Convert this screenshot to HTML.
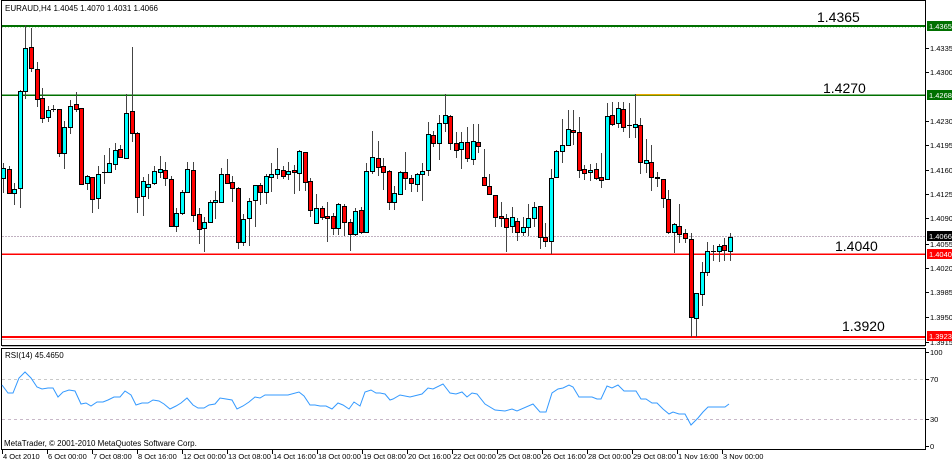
<!DOCTYPE html>
<html><head><meta charset="utf-8">
<style>
html,body{margin:0;padding:0;background:#fff;}
body{width:952px;height:462px;overflow:hidden;font-family:"Liberation Sans",sans-serif;}
svg text{font-family:"Liberation Sans",sans-serif;}
</style></head>
<body>
<svg id="s" width="952" height="462" xmlns="http://www.w3.org/2000/svg" shape-rendering="crispEdges">
<rect x="0" y="0" width="952" height="462" fill="#fff"/>
<!-- panels -->
<rect x="1.5" y="0.5" width="924" height="345" fill="none" stroke="#000"/>
<rect x="1.5" y="348.5" width="924" height="101" fill="none" stroke="#000"/>
<line x1="2" y1="346.5" x2="925" y2="346.5" stroke="#bbb"/>
<!-- horizontal lines -->
<line x1="2" y1="27.5" x2="925" y2="27.5" stroke="#b6e0b6" stroke-dasharray="1,2"/>
<line x1="2" y1="26" x2="925" y2="26" stroke="#007000" stroke-width="2"/>
<line x1="2" y1="95" x2="925" y2="95" stroke="#007000" stroke-width="1.5"/>
<line x1="635" y1="94.5" x2="680" y2="94.5" stroke="#e8a800" stroke-width="1.5"/>
<line x1="2" y1="236.5" x2="925" y2="236.5" stroke="#c0b0c0" stroke-dasharray="2,1"/>
<line x1="2" y1="254" x2="925" y2="254" stroke="#ff0000" stroke-width="1.5"/>
<line x1="2" y1="337" x2="925" y2="337" stroke="#ff0000" stroke-width="2"/>
<line x1="2" y1="339.5" x2="925" y2="339.5" stroke="#ffc0c0"/>
<line x1="2" y1="379.5" x2="925" y2="379.5" stroke="#c8c8c8" stroke-dasharray="3,3"/>
<line x1="2" y1="419.5" x2="925" y2="419.5" stroke="#c8b8c8" stroke-dasharray="3,3"/>
<g id="candles"></g>
<polyline id="rsi" fill="none" stroke="#3399ff" stroke-width="1" shape-rendering="auto"/>
<!-- texts -->
<text x="5" y="11" font-size="8" fill="#000">EURAUD,H4  1.4045 1.4070 1.4031 1.4066</text>
<text x="5" y="358" font-size="8" fill="#000">RSI(14) 45.4650</text>
<text x="4" y="446" font-size="8" fill="#000">MetaTrader, © 2001-2010 MetaQuotes Software Corp.</text>
<text x="817" y="22" font-size="14" fill="#000">1.4365</text>
<text x="823" y="93" font-size="14" fill="#000">1.4270</text>
<text x="835" y="251" font-size="14" fill="#000">1.4040</text>
<text x="842" y="331" font-size="14" fill="#000">1.3920</text>
<g id="axis" font-size="7.5" fill="#000"></g>
</svg>
<script>
var C=[
[168,178,163,193,1],[169,193,166,194,0],[193,189,183,205,1],[188,91,90,208,1],[91,48,25,99,1],[47,68,28,72,0],[69,99,62,107,0],[98,118,88,123,0],[117,110,106,122,1],[109,109,105,112,1],
[109,153,109,157,0],[153,127,121,169,1],[127,106,100,134,1],[104,109,92,112,0],[108,184,108,184,0],[183,176,175,190,1],[177,199,177,213,0],[198,174,166,209,1],[172,172,155,184,1],[172,163,148,173,1],
[164,150,143,170,1],[149,157,145,158,0],[158,113,94,159,1],[111,133,47,142,0],[133,197,132,213,0],[196,181,177,216,1],[187,184,174,199,1],[183,171,166,185,1],[172,169,156,178,1],[170,178,162,186,0],
[179,226,176,227,0],[226,213,208,232,1],[213,192,190,215,1],[192,169,162,193,1],[170,215,162,222,0],[214,229,208,244,0],[228,222,217,252,1],[222,202,200,223,1],[202,200,191,219,1],[202,174,168,203,1],
[174,183,159,184,0],[182,188,176,202,0],[188,242,187,249,0],[242,219,214,246,1],[218,201,198,246,1],[200,185,185,227,1],[185,192,183,205,0],[192,176,174,204,1],[177,174,163,192,1],[174,169,148,179,1],
[170,176,166,179,0],[174,171,162,180,1],[170,172,165,194,0],[173,151,150,191,1],[152,182,152,191,0],[181,210,178,217,0],[223,208,194,223,1],[208,217,206,220,0],[216,218,202,242,0],[216,228,213,235,0],
[228,204,203,235,1],[206,222,204,236,0],[222,234,219,251,0],[234,211,208,236,1],[210,232,207,234,0],[232,171,163,232,1],[171,157,131,174,1],[158,167,141,176,0],[166,172,158,190,0],[171,202,170,210,0],
[202,193,186,210,1],[194,172,171,195,1],[172,178,152,190,0],[178,183,175,192,0],[184,174,173,192,1],[174,171,163,201,1],[170,134,122,176,1],[135,143,131,147,0],[143,123,115,160,1],[123,115,94,132,1],
[116,143,115,150,0],[143,150,132,158,0],[149,142,132,169,1],[142,158,127,162,0],[159,141,124,165,1],[142,146,124,153,0],[177,185,149,186,0],[186,194,174,195,0],[195,217,195,227,0],[216,218,202,227,0],
[218,227,214,252,0],[226,217,207,233,1],[221,232,218,241,0],[232,227,217,236,1],[227,218,204,236,1],[218,207,202,227,1],[206,237,206,249,0],[237,241,223,247,0],[241,178,169,254,1],[177,151,150,178,1],
[151,145,119,163,1],[145,129,110,146,1],[130,132,110,145,0],[132,170,117,178,0],[169,173,165,180,0],[172,170,164,181,1],[169,178,163,180,0],[177,180,153,188,0],[179,116,103,180,1],[115,124,102,126,0],
[123,108,102,128,1],[109,127,102,132,0],[125,125,103,138,1],[127,124,94,138,1],[125,162,118,174,0],[163,160,139,173,1],[162,177,145,191,0],[177,178,172,187,0],[179,198,179,208,0],[199,232,190,234,0],
[232,224,223,253,1],[226,234,204,243,0],[233,238,229,243,0],[239,317,233,337,0],[318,293,293,337,1],[294,272,262,306,1],[272,251,242,276,1],[251,251,245,261,1],[251,246,244,262,1],[245,250,238,261,0],
[251,237,233,261,1]];
var ns="http://www.w3.org/2000/svg",g=document.getElementById('candles'),h='';
for(var i=0;i<C.length;i++){var c=C[i],x=Math.round(3+i*5.59);
h+='<line x1="'+(x+0.5)+'" y1="'+c[2]+'" x2="'+(x+0.5)+'" y2="'+c[3]+'" stroke="#444"/>';
var t=Math.min(c[0],c[1]),b=Math.max(c[0],c[1]);
if(b-t<1){h+='<line x1="'+(x-2)+'" y1="'+(t+0.5)+'" x2="'+(x+3)+'" y2="'+(t+0.5)+'" stroke="#000"/>';}
else h+='<rect x="'+(x-1.5)+'" y="'+(t+0.5)+'" width="4" height="'+(b-t)+'" fill="'+(c[4]?'#00ffff':'#ff0000')+'" stroke="#000"/>';}
g.innerHTML=h;
var R=[[2,385],[8,393],[13,393],[19,378],[25,372],[31,378],[37,387],[42,389],[48,388],[53,388],[58,397],[63,392],[69,390],[75,391],[81,404],[86,403],[91,406],[97,402],[103,402],[108,400],[114,397],[120,397],[125,391],[131,395],[136,405],[142,403],[148,403],[153,400],[159,401],[164,404],[170,409],[176,406],[181,403],[187,398],[193,405],[198,408],[204,408],[209,405],[215,404],[220,398],[226,399],[232,400],[237,409],[243,406],[249,402],[255,397],[260,398],[265,395],[271,395],[276,395],[282,395],[288,395],[299,392],[304,396],[310,405],[315,405],[320,406],[326,406],[332,409],[338,403],[343,405],[349,409],[354,402],[360,406],[365,392],[371,390],[376,393],[380,393],[385,394],[390,400],[393,399],[400,395],[410,397],[422,394],[428,388],[433,389],[443,384],[450,393],[456,394],[462,392],[467,397],[472,393],[477,394],[485,404],[495,410],[505,411],[512,409],[517,411],[533,404],[540,412],[546,412],[552,393],[558,389],[563,388],[569,385],[573,387],[579,397],[585,397],[592,397],[597,399],[601,399],[607,386],[612,388],[618,385],[624,391],[636,391],[641,399],[646,399],[652,403],[657,403],[663,409],[669,414],[673,412],[679,414],[685,414],[691,425],[698,418],[703,412],[708,407],[717,407],[722,407],[725,407],[729,404]];
document.getElementById('rsi').setAttribute('points',R.map(function(p){return p.join(',')}).join(' '));
var a='';
var P=[['1.4335',48],['1.4300',72],['1.4230',121],['1.4195',145],['1.4160',170],['1.4125',194],['1.4090',218],['1.4055',244],['1.4020',268],['1.3985',292],['1.3950',317],['1.3915',342],['100',352],['70',379],['30',419],['0',446]];
P.forEach(function(p){a+='<line x1="926" y1="'+(p[1]+0.5)+'" x2="929" y2="'+(p[1]+0.5)+'" stroke="#000"/><text x="930" y="'+(p[1]+3)+'">'+p[0]+'</text>';});
var B=[['1.4365',26,'#007000','#fff'],['1.4268',95,'#007000','#fff'],['1.4066',236,'#000','#fff'],['1.4040',254,'#ff0000','#fff'],['1.3923',336,'#ff0000','#fff']];
B.forEach(function(p){a+='<rect x="927" y="'+(p[1]-5)+'" width="25" height="10" fill="'+p[2]+'"/><text x="929" y="'+(p[1]+3)+'" fill="'+p[3]+'">'+p[0]+'</text>';});
var T=['4 Oct 2010','6 Oct 00:00','7 Oct 08:00','8 Oct 16:00','12 Oct 00:00','13 Oct 08:00','14 Oct 16:00','18 Oct 00:00','19 Oct 08:00','20 Oct 16:00','22 Oct 00:00','25 Oct 08:00','26 Oct 16:00','28 Oct 00:00','29 Oct 08:00','1 Nov 16:00','3 Nov 00:00'];
T.forEach(function(s,i){var x=2+i*45;a+='<line x1="'+(x+0.5)+'" y1="450" x2="'+(x+0.5)+'" y2="454" stroke="#000"/><text x="'+(x+1)+'" y="459">'+s+'</text>';});
document.getElementById('axis').innerHTML=a;
</script>
</body></html>
